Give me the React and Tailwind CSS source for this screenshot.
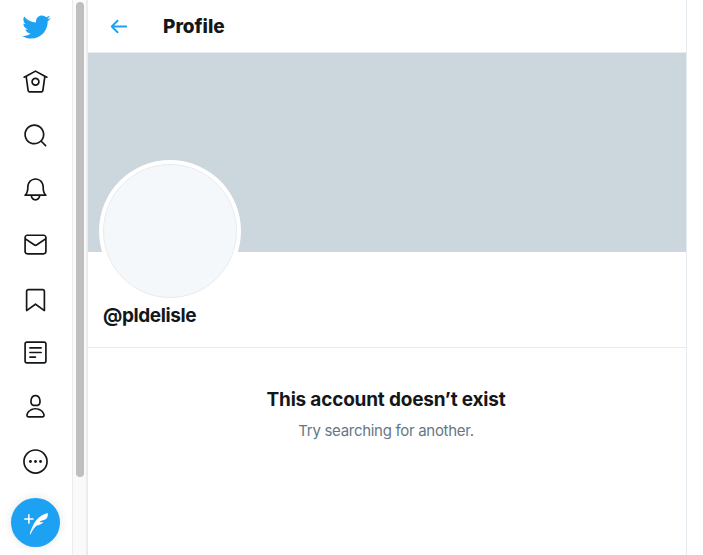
import React from 'react';

const Icon = ({ d, className = 'w-[27px] h-[27px] text-[#14171a]', children }) => (
  <svg viewBox="0 0 24 24" fill="currentColor" className={className}>
    {d && <path d={d} />}
    {children}
  </svg>
);

const bird = 'M23.643 4.937c-.835.37-1.732.62-2.675.73.962-.576 1.7-1.49 2.048-2.578-.9.534-1.897.922-2.958 1.13-.85-.904-2.06-1.47-3.4-1.47-2.572 0-4.658 2.086-4.658 4.66 0 .364.042.718.12 1.06-3.873-.195-7.304-2.05-9.602-4.868-.4.69-.63 1.49-.63 2.342 0 1.616.823 3.043 2.072 3.878-.764-.025-1.482-.234-2.11-.583v.06c0 2.257 1.605 4.14 3.737 4.568-.392.106-.803.162-1.227.162-.3 0-.593-.028-.877-.082.593 1.85 2.313 3.198 4.352 3.234-1.595 1.25-3.604 1.995-5.786 1.995-.376 0-.747-.022-1.112-.065 2.062 1.323 4.51 2.093 7.14 2.093 8.57 0 13.255-7.098 13.255-13.254 0-.2-.005-.402-.014-.602.91-.658 1.7-1.477 2.323-2.41z';

const navIcons = [
  <Icon key="home">
    <path d="M22.46 7.57L12.357 2.115c-.223-.12-.49-.12-.713 0L1.543 7.57c-.364.197-.5.652-.303 1.017.135.25.394.393.66.393.12 0 .243-.03.356-.09l.815-.44L4.7 19.963c.214 1.215 1.308 2.062 2.658 2.062h9.282c1.352 0 2.445-.848 2.663-2.087l1.626-11.49.818.442c.364.193.82.06 1.017-.304.196-.363.06-.818-.304-1.016zm-4.638 12.133c-.107.606-.703.822-1.18.822H7.36c-.48 0-1.075-.216-1.178-.798L4.48 7.69 12 3.628l7.522 4.06-1.7 12.015z" />
    <path d="M8.22 12.184c0 2.084 1.695 3.78 3.78 3.78s3.78-1.696 3.78-3.78-1.695-3.78-3.78-3.78-3.78 1.696-3.78 3.78zm6.06 0c0 1.258-1.022 2.28-2.28 2.28s-2.28-1.022-2.28-2.28 1.022-2.28 2.28-2.28 2.28 1.022 2.28 2.28z" />
  </Icon>,
  <Icon key="search" d="M21.53 20.47l-3.66-3.66C19.195 15.24 20 13.214 20 11c0-4.97-4.03-9-9-9s-9 4.03-9 9 4.03 9 9 9c2.215 0 4.24-.804 5.808-2.13l3.66 3.66c.147.146.34.22.53.22s.385-.073.53-.22c.295-.293.295-.767.002-1.06zM3.5 11c0-4.135 3.365-7.5 7.5-7.5s7.5 3.365 7.5 7.5-3.365 7.5-7.5 7.5-7.5-3.365-7.5-7.5z" />,
  <Icon key="bell" d="M21.697 16.468c-.02-.016-2.14-1.64-2.103-6.03.02-2.532-.812-4.782-2.347-6.335C15.872 2.71 14.01 1.94 12.005 1.93h-.013c-2.004.01-3.866.78-5.242 2.174-1.534 1.553-2.368 3.802-2.346 6.334.037 4.33-2.02 5.967-2.102 6.03-.26.193-.366.53-.265.838.102.308.39.515.712.515h4.92c.102 2.31 1.997 4.16 4.33 4.16s4.226-1.85 4.327-4.16h4.922c.322 0 .61-.206.71-.514.103-.307-.003-.645-.263-.838zM12 20.478c-1.505 0-2.73-1.177-2.828-2.658h5.656c-.1 1.48-1.323 2.66-2.828 2.66zM4.38 16.32c.74-1.132 1.548-3.028 1.524-5.896-.018-2.16.644-3.982 1.913-5.267C8.91 4.05 10.397 3.437 12 3.43c1.603.008 3.087.62 4.18 1.728 1.27 1.285 1.933 3.106 1.915 5.267-.024 2.868.785 4.765 1.525 5.896H4.38z" />,
  <Icon key="mail" d="M19.25 3.018H4.75C3.233 3.018 2 4.252 2 5.77v12.495c0 1.518 1.233 2.753 2.75 2.753h14.5c1.517 0 2.75-1.235 2.75-2.753V5.77c0-1.518-1.233-2.752-2.75-2.752zm-14.5 1.5h14.5c.69 0 1.25.56 1.25 1.25v.714l-8.05 5.367c-.273.18-.626.182-.9-.002L3.5 6.482v-.714c0-.69.56-1.25 1.25-1.25zm14.5 14.998H4.75c-.69 0-1.25-.56-1.25-1.25V8.24l7.24 4.83c.383.256.822.384 1.26.384.44 0 .877-.128 1.26-.383l7.24-4.83v10.022c0 .69-.56 1.25-1.25 1.25z" />,
  <Icon key="bookmark" d="M19.9 23.5c-.157 0-.312-.05-.442-.144L12 17.928l-7.458 5.43c-.228.164-.53.19-.78.06-.25-.127-.41-.385-.41-.667V5.6c0-1.24 1.01-2.25 2.25-2.25h12.798c1.24 0 2.25 1.01 2.25 2.25v17.15c0 .282-.158.54-.41.668-.106.055-.223.082-.34.082zM12 16.25c.155 0 .31.048.44.144l6.71 4.883V5.6c0-.412-.337-.75-.75-.75H5.6c-.413 0-.75.338-.75.75v15.677l6.71-4.883c.13-.096.285-.144.44-.144z" />,
  <Icon key="lists">
    <path d="M19.75 22H4.25C3.01 22 2 20.99 2 19.75V4.25C2 3.01 3.01 2 4.25 2h15.5C20.99 2 22 3.01 22 4.25v15.5c0 1.24-1.01 2.25-2.25 2.25zM4.25 3.5c-.414 0-.75.337-.75.75v15.5c0 .413.336.75.75.75h15.5c.414 0 .75-.337.75-.75V4.25c0-.413-.336-.75-.75-.75H4.25z" />
    <path d="M17 8.64H7c-.414 0-.75-.337-.75-.75s.336-.75.75-.75h10c.414 0 .75.336.75.75s-.336.75-.75.75zm0 4.11H7c-.414 0-.75-.336-.75-.75s.336-.75.75-.75h10c.414 0 .75.336.75.75s-.336.75-.75.75zm-5 4.11H7c-.414 0-.75-.335-.75-.75s.336-.75.75-.75h5c.414 0 .75.337.75.75s-.336.75-.75.75z" />
  </Icon>,
  <Icon key="profile" d="M12 11.816c1.355 0 2.872-.15 3.84-1.256.814-.93 1.078-2.368.806-4.392-.38-2.825-2.117-4.512-4.646-4.512S7.734 3.343 7.354 6.17c-.272 2.022-.008 3.46.806 4.39.968 1.107 2.485 1.256 3.84 1.256zM8.84 6.368c.162-1.2.787-3.212 3.16-3.212s2.998 2.013 3.16 3.212c.207 1.55.057 2.627-.45 3.205-.455.52-1.266.743-2.71.743s-2.255-.223-2.71-.743c-.507-.578-.657-1.656-.45-3.205zm11.44 12.868c-.877-3.526-4.282-5.99-8.28-5.99s-7.403 2.464-8.28 5.99c-.172.692-.028 1.4.395 1.94.408.52 1.04.82 1.733.82h12.304c.693 0 1.325-.3 1.733-.82.424-.54.567-1.247.394-1.94zm-1.576 1.016c-.126.16-.316.246-.552.246H5.848c-.235 0-.426-.085-.552-.246-.137-.174-.18-.412-.12-.654.71-2.855 3.517-4.85 6.824-4.85s6.114 1.994 6.824 4.85c.06.242.017.48-.12.654z" />,
  <Icon key="more">
    <circle cx="12" cy="12" r="10.25" fill="none" stroke="currentColor" strokeWidth="1.5" />
    <circle cx="7.5" cy="12" r="1.25" />
    <circle cx="12" cy="12" r="1.25" />
    <circle cx="16.5" cy="12" r="1.25" />
  </Icon>,
];

export default function App() {
  return (
    <div className="flex h-[555px] w-[703px] overflow-hidden bg-white font-['Inter',sans-serif] text-[#14171a]">
      {/* left nav */}
      <div className="w-[72px] shrink-0 flex flex-col items-center pr-[1px]">
        <div className="h-[54px] flex items-center justify-center">
          <Icon d={bird} className="w-[30px] h-[30px] text-[#1da1f2]" />
        </div>
        {navIcons.map((icon) => (
          <div key={icon.key} className="h-[54.3px] w-full flex items-center justify-center">
            {icon}
          </div>
        ))}
        <button className="mt-[10px] w-[49px] h-[49px] rounded-full bg-[#1da1f2] flex items-center justify-center shadow-[0_0_8px_rgba(101,119,134,0.2)]">
          <Icon
            d="M8.8 7.2H5.6V3.9c0-.4-.3-.8-.8-.8s-.7.4-.7.8v3.3H.8c-.4 0-.8.3-.8.8s.3.8.8.8h3.3v3.3c0 .4.3.8.8.8s.8-.3.8-.8V8.7H9c.4 0 .8-.3.8-.8s-.5-.7-1-.7zm15-4.9v-.1h-.1c-.1 0-9.2 1.2-14.4 11.7-3.8 7.6-3.6 9.9-3.3 9.9.3.1 3.4-6.5 6.7-9.2 5.2-1.1 6.6-3.6 6.6-3.6s-1.5.2-2.1.2c-.8 0-1.4-.2-1.7-.3 1.3-1.2 2.4-1.5 3.5-1.7.9-.2 1.8-.4 3-1.2 2.2-1.6 1.9-5.5 1.9-5.5z"
            className="w-[24px] h-[24px] text-white"
          />
        </button>
      </div>

      {/* scrollbar */}
      <div className="w-[15px] shrink-0 bg-[#fafafa] border-x border-[#ececec] px-[3px] pt-[2px]">
        <div className="w-[8px] h-[475px] rounded-full bg-[#bfbfbf]" />
      </div>

      {/* main column */}
      <div className="w-[600px] shrink-0 border-x border-[#e6ecf0] flex flex-col">
        <div className="h-[53px] shrink-0 flex items-center pl-[19px] border-b border-[#e6ecf0]">
          <Icon
            d="M20 11H7.414l4.293-4.293c.39-.39.39-1.023 0-1.414s-1.023-.39-1.414 0l-6 6c-.39.39-.39 1.023 0 1.414l6 6c.195.195.45.293.707.293s.512-.098.707-.293c.39-.39.39-1.023 0-1.414L7.414 13H20c.553 0 1-.447 1-1s-.447-1-1-1z"
            className="w-[23px] h-[23px] text-[#1da1f2]"
          />
          <h1 className="ml-[33px] text-[19px] font-extrabold leading-none">Profile</h1>
        </div>
        <div className="h-[199px] shrink-0 bg-[#ccd6dd]" />
        <div className="h-[96px] shrink-0 border-b border-[#e6ecf0] pl-[11px]">
          <div className="-mt-[92px] w-[142px] h-[142px] rounded-full bg-white p-[4px] relative">
            <div className="w-full h-full rounded-full bg-[#f5f8fa] border border-[#e6ecf0]" />
          </div>
          <div className="mt-[2px] pl-[4px] text-[19px] font-bold leading-[23px] tracking-[-0.4px]">@pldelisle</div>
        </div>
        <div className="flex flex-col items-center pt-[40px] pr-[2px]">
          <h2 className="text-[19px] font-bold leading-[23px] tracking-[-0.2px]">This account doesn’t exist</h2>
          <p className="mt-[10px] text-[15px] leading-[20px] tracking-[-0.3px] text-[#657786]">Try searching for another.</p>
        </div>
      </div>
    </div>
  );
}
